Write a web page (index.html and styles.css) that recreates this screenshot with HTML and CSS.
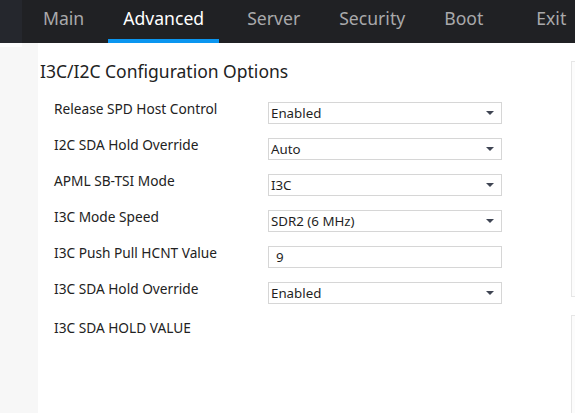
FILE: index.html
```html
<!DOCTYPE html>
<html>
<head>
<meta charset="utf-8">
<link rel="stylesheet" href="styles.css">
</head>
<body>
<div class="page">
  <nav class="nav">
    <div class="nav-logo"></div>
    <div class="tabs">
      <div class="tab">Main</div>
      <div class="tab active">Advanced</div>
      <div class="tab tab-server">Server</div>
      <div class="tab">Security</div>
      <div class="tab">Boot</div>
      <div class="tab tab-exit">Exit</div>
    </div>
  </nav>
  <div class="body">
    <aside class="side"><div class="side-top"></div></aside>
    <main class="content">
      <h1 class="title">I3C/I2C Configuration Options</h1>
      <div class="rows">
        <div class="row"><div class="label">Release SPD Host Control</div><div class="select"><span>Enabled</span><i class="arrow"></i></div></div>
        <div class="row"><div class="label">I2C SDA Hold Override</div><div class="select"><span>Auto</span><i class="arrow"></i></div></div>
        <div class="row"><div class="label">APML SB-TSI Mode</div><div class="select"><span>I3C</span><i class="arrow"></i></div></div>
        <div class="row"><div class="label">I3C Mode Speed</div><div class="select"><span>SDR2 (6 MHz)</span><i class="arrow"></i></div></div>
        <div class="row"><div class="label">I3C Push Pull HCNT Value</div><div class="select input"><span>9</span></div></div>
        <div class="row"><div class="label">I3C SDA Hold Override</div><div class="select"><span>Enabled</span><i class="arrow"></i></div></div>
        <div class="row last"><div class="label caps">I3C SDA HOLD VALUE</div></div>
      </div>
    </main>
    <aside class="right">
      <div class="panel p1"></div>
      <div class="panel p2"></div>
    </aside>
  </div>
</div>
</body>
</html>
```
FILE: styles.css
```css
html, body {
  margin: 0;
  padding: 0;
  background: #ffffff;
}
.page {
  width: 575px;
  height: 413px;
  overflow: hidden;
  font-family: "Noto Sans", "Open Sans", sans-serif;
}
.nav {
  height: 43px;
  background: #202124;
  display: flex;
}
.nav-logo {
  width: 22px;
  height: 43px;
  background: #25272d;
  flex: none;
}
.tabs {
  display: flex;
  gap: 9px;
  padding-left: 6px;
  white-space: nowrap;
}
.tab {
  padding: 0 15px;
  height: 43px;
  line-height: 36px;
  font-size: 17.6px;
  color: #a9a9ab;
  box-sizing: border-box;
  flex: none;
}
.tab-server {
  margin-left: 4px;
}
.tab-exit {
  margin-left: 14px;
}
.tab.active {
  color: #ffffff;
  border-bottom: 4px solid #0b96f0;
}
.body {
  display: flex;
  height: 370px;
}
.side {
  width: 38px;
  background: #f7f7f7;
  flex: none;
}
.side-top {
  width: 22px;
  height: 4px;
  background: #fdfdfd;
}
.content {
  width: 533px;
  flex: none;
  padding-left: 2px;
  box-sizing: border-box;
}
.title {
  margin: 16px 0 0 0;
  font-size: 17.5px;
  font-weight: 400;
  line-height: 24px;
  color: #222;
}
.rows {
  margin-top: 17px;
  padding-left: 14px;
}
.row {
  display: flex;
  height: 36px;
}
.label {
  width: 214px;
  flex: none;
  font-size: 13.7px;
  line-height: 18px;
  color: #222;
  white-space: nowrap;
}
.row.last {
  margin-top: 3px;
}
.select {
  margin-top: 2px;
  width: 234px;
  height: 22px;
  border: 1px solid #d6d6d6;
  box-sizing: border-box;
  display: flex;
  align-items: center;
  justify-content: space-between;
  padding: 0 7px 0 2px;
  font-size: 13.3px;
  color: #1f1f1f;
}
.select.input {
  padding-left: 7px;
}
.arrow {
  width: 0;
  height: 0;
  border-left: 4px solid transparent;
  border-right: 4px solid transparent;
  border-top: 4px solid #3f4553;
}
.right {
  flex: 1;
  padding-top: 18px;
}
.panel {
  background: #fcfcfc;
  border: 1px solid #e6e6e6;
  border-right: none;
  box-sizing: border-box;
}
.p1 {
  height: 236px;
}
.p2 {
  margin-top: 18px;
  height: 120px;
}
```
